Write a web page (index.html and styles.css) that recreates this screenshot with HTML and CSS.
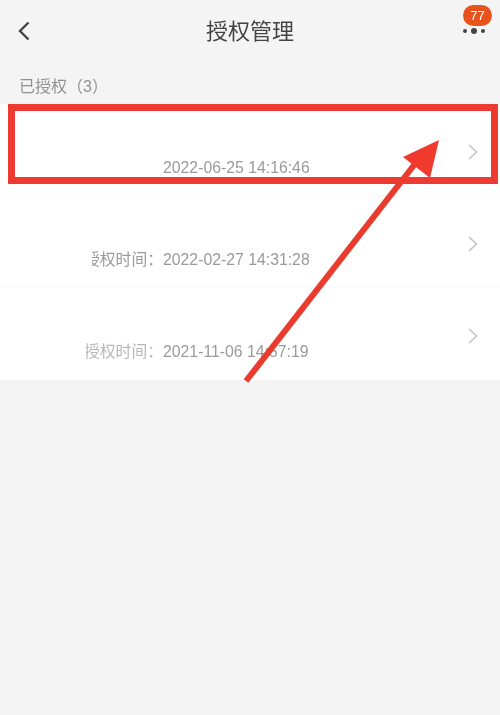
FILE: index.html
```html
<!DOCTYPE html>
<html lang="zh-CN">
<head>
  <meta charset="utf-8">
  <meta name="viewport" content="width=device-width, initial-scale=1">
  <title>授权管理</title>
  <link rel="stylesheet" href="styles.css">
</head>
<body>
  <div class="page">
    <header class="top-bar">
      <svg class="back-icon" width="14" height="22" viewBox="0 0 14 22">
        <path d="M11.5 2.5 L3 11 L11.5 19.5" fill="none" stroke="#444" stroke-width="2.4"/>
      </svg>
      <h1 class="title">授权管理</h1>
      <div class="more">
        <span class="dot small"></span>
        <span class="dot"></span>
        <span class="dot small"></span>
        <span class="badge">77</span>
      </div>
    </header>

    <p class="section-label">已授权（3）</p>

    <div class="list">
      <div class="row">
        <div class="time">
          <span class="time-label"></span>
          <span class="time-value">2022-06-25 14:16:46</span>
        </div>
        <svg class="chevron" width="12" height="18" viewBox="0 0 12 18">
          <path d="M2 2 L9.5 9 L2 16" fill="none" stroke="#c4c4c4" stroke-width="1.6"/>
        </svg>
      </div>
      <div class="row">
        <div class="time">
          <span class="time-label cut">授权时间：</span>
          <span class="time-value">2022-02-27 14:31:28</span>
        </div>
        <svg class="chevron" width="12" height="18" viewBox="0 0 12 18">
          <path d="M2 2 L9.5 9 L2 16" fill="none" stroke="#c4c4c4" stroke-width="1.6"/>
        </svg>
      </div>
      <div class="row">
        <div class="time">
          <span class="time-label smudged">授权时间：</span>
          <span class="time-value">2021-11-06 14:57:19</span>
        </div>
        <svg class="chevron" width="12" height="18" viewBox="0 0 12 18">
          <path d="M2 2 L9.5 9 L2 16" fill="none" stroke="#c4c4c4" stroke-width="1.6"/>
        </svg>
      </div>
    </div>

    <!-- red annotation drawn on top of the screenshot -->
    <div class="mark-box"></div>
    <svg class="mark-arrow" width="500" height="715" viewBox="0 0 500 715">
      <line x1="246" y1="381" x2="418" y2="160" stroke="#e93c2e" stroke-width="6"/>
      <polygon points="439,140 403,157 430,178" fill="#f03a2e"/>
    </svg>
  </div>
</body>
</html>
```

FILE: styles.css
```css
* {
  box-sizing: border-box;
}
body {
  margin: 0;
  background-color: #f4f4f4;
  font-family: "Liberation Sans", "Noto Sans CJK SC", sans-serif;
}
.page {
  position: relative;
  height: 715px;
  overflow: hidden;
  filter: blur(0.4px);
}
.top-bar {
  display: flex;
  align-items: center;
  justify-content: center;
  position: relative;
  height: 58px;
}
.back-icon {
  position: absolute;
  left: 17px;
  top: 20px;
}
.title {
  margin: 0;
  font-size: 22px;
  font-weight: normal;
  color: #444;
}
.more {
  position: absolute;
  left: 463px;
  top: 28px;
  display: flex;
  align-items: center;
  gap: 4px;
}
.dot {
  width: 6px;
  height: 6px;
  border-radius: 50%;
  background: #444;
}
.dot.small {
  width: 4px;
  height: 4px;
}
.badge {
  position: absolute;
  left: 0;
  top: -23px;
  width: 29px;
  height: 21px;
  border-radius: 11px;
  background: #e8521d;
  color: #fff;
  font-size: 13px;
  line-height: 21px;
  text-align: center;
}
.section-label {
  margin: 0;
  height: 46px;
  padding: 17px 0 0 19px;
  font-size: 16px;
  line-height: 24px;
  color: #919191;
}
.list {
  background: #fff;
}
.row {
  display: flex;
  justify-content: space-between;
  height: 92px;
  padding-right: 21px;
  border-bottom: 1px solid #fafafa;
}
.row:last-child {
  border-bottom: none;
}
.time {
  display: flex;
  padding-top: 54px;
  font-size: 15.8px;
  line-height: 20px;
  color: #9a9a9a;
}
.time-label {
  display: flex;
  justify-content: flex-end;
  width: 163px;
  white-space: nowrap;
}
/* the picture has the start of these labels wiped out */
.time-label.cut {
  clip-path: inset(0 0 0 92px);
}
.time-label.smudged {
  clip-path: inset(0 0 0 86px);
  opacity: 0.7;
  filter: blur(0.6px);
}
.chevron {
  margin-top: 39px;
}
.mark-box {
  position: absolute;
  left: 8px;
  top: 104px;
  width: 490px;
  height: 80px;
  border: 7px solid #ee3b32;
}
.mark-arrow {
  position: absolute;
  left: 0;
  top: 0;
}
```
